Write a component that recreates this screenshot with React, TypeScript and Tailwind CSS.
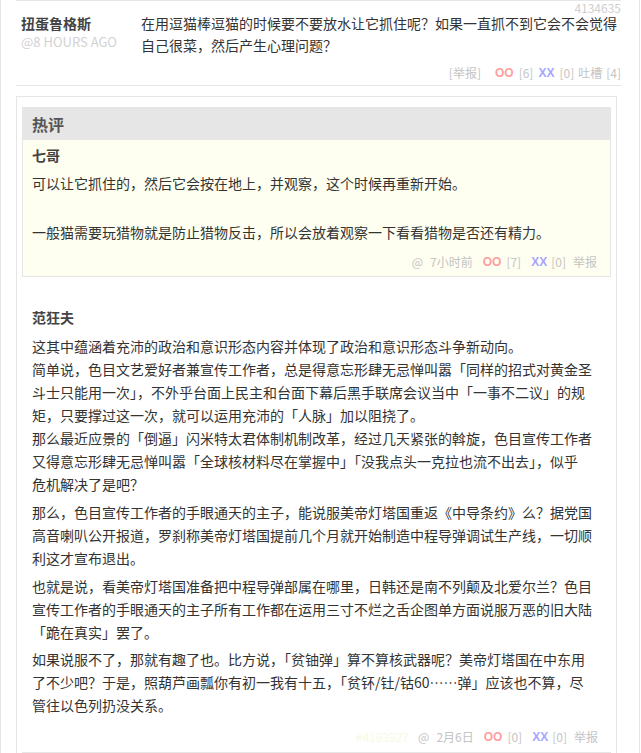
const oo = 'font-bold text-[#ff9e9e] font-["Liberation_Sans",sans-serif]';
const xx = 'font-bold text-[#a6a6ff] font-["Liberation_Sans",sans-serif]';

function Meta({ time, up, down, id }: { time: string; up: number; down: number; id?: string }) {
  return (
    <div className="flex justify-end text-[12px] leading-[16px] text-[#c4c4c4]">
      {id ? <span className="mr-[9px] text-[#f8f8e4]">{id}</span> : null}
      <span>@</span>
      <span className="ml-[7px]">{time}</span>
      <span className={`ml-[10px] ${oo}`}>OO</span>
      <span className="ml-[5px]">[{up}]</span>
      <span className={`ml-[10px] ${xx}`}>XX</span>
      <span className="ml-[4px]">[{down}]</span>
      <span className="ml-[7px]">举报</span>
    </div>
  );
}

const lines: { text: string[]; gap: string }[] = [
  { gap: '', text: ['这其中蕴涵着充沛的政治和意识形态内容并体现了政治和意识形态斗争新动向。'] },
  {
    gap: '',
    text: [
      '简单说，色目文艺爱好者兼宣传工作者，总是得意忘形肆无忌惮叫嚣「同样的招式对黄金圣',
      '斗士只能用一次」，不外乎台面上民主和台面下幕后黑手联席会议当中「一事不二议」的规',
      '矩，只要撑过这一次，就可以运用充沛的「人脉」加以阻挠了。',
    ],
  },
  {
    gap: '',
    text: [
      '那么最近应景的「倒逼」闪米特太君体制机制改革，经过几天紧张的斡旋，色目宣传工作者',
      '又得意忘形肆无忌惮叫嚣「全球核材料尽在掌握中」「没我点头一克拉也流不出去」，似乎',
      '危机解决了是吧？',
    ],
  },
  {
    gap: 'mt-[5px]',
    text: [
      '那么，色目宣传工作者的手眼通天的主子，能说服美帝灯塔国重返《中导条约》么？据党国',
      '高音喇叭公开报道，罗刹称美帝灯塔国提前几个月就开始制造中程导弹调试生产线，一切顺',
      '利这才宣布退出。',
    ],
  },
  {
    gap: 'mt-[5px]',
    text: [
      '也就是说，看美帝灯塔国准备把中程导弹部属在哪里，日韩还是南不列颠及北爱尔兰？色目',
      '宣传工作者的手眼通天的主子所有工作都在运用三寸不烂之舌企图单方面说服万恶的旧大陆',
      '「跪在真实」罢了。',
    ],
  },
  {
    gap: 'mt-[4px]',
    text: [
      '如果说服不了，那就有趣了也。比方说，「贫铀弹」算不算核武器呢？美帝灯塔国在中东用',
      '了不少吧？于是，照葫芦画瓢你有初一我有十五，「贫钚/钍/钴60……弹」应该也不算，尽',
      '管往以色列扔没关系。',
    ],
  },
];

export default function App() {
  return (
    <div className="min-h-[753px] w-[640px] border-x border-[#e6e6e6] bg-white font-['Noto_Sans_CJK_SC','Noto_Sans',sans-serif] text-[14px] text-[#333]">
      <div className="ml-[15px] w-[605px]">
        <div className="relative border-t border-[#e6e6e6] pt-[11px]">
          <span className="absolute right-0 top-[2px] text-[12px] leading-[10px] text-[#cfcfcf]">4134635</span>
          <div className="flex">
            <div className="w-[125px] shrink-0 pl-[5px]">
              <div className="font-bold leading-[22px] text-[#444]">扭蛋鲁格斯</div>
              <div className="text-[13px] leading-[16px] text-[#d2d2d2]">@8 HOURS AGO</div>
            </div>
            <p className="flex-1 leading-[22px]">在用逗猫棒逗猫的时候要不要放水让它抓住呢？如果一直抓不到它会不会觉得自己很菜，然后产生心理问题？</p>
          </div>
          <div className="mt-[9px] flex justify-end border-b border-[#e6e6e6] pb-[4px] text-[12px] leading-[16px] text-[#c4c4c4]">
            <span>[举报]</span>
            <span className={`ml-[14px] ${oo}`}>OO</span>
            <span className="ml-[5px]">[6]</span>
            <span className={`ml-[5px] ${xx}`}>XX</span>
            <span className="ml-[5px]">[0]</span>
            <span className="ml-[4px]">吐槽</span>
            <span className="ml-[4px]">[4]</span>
          </div>
        </div>

        <div className="mt-[10px] w-[601px] border border-[#e6e6e6] px-[5px] pt-[10px]">
          <div className="border border-[#e6e6e6]">
            <div className="h-[32px] bg-[#e6e6e6] pl-[9px] text-[16px] font-bold leading-[32px] text-[#555]">热评</div>
            <div className="bg-[#fefff0] pb-[6px] pl-[9px] pr-[13px] pt-[4px]">
              <div className="font-bold leading-[22px] text-[#444]">七哥</div>
              <p className="mt-[5px] leading-[24.5px]">可以让它抓住的，然后它会按在地上，并观察，这个时候再重新开始。</p>
              <p className="mt-[24.5px] leading-[24.5px]">一般猫需要玩猎物就是防止猎物反击，所以会放着观察一下看看猎物是否还有精力。</p>
              <div className="mt-[9.5px]">
                <Meta time="7小时前" up={7} down={0} />
              </div>
            </div>
          </div>

          <div className="border-b border-[#e6e6e6] pb-[7.5px] pl-[10px] pr-[13px] pt-[29px]">
            <div className="font-bold leading-[22px] text-[#444]">范狂夫</div>
            <div className="mt-[7px] whitespace-nowrap leading-[23px]">
              {lines.map((p, i) => (
                <p key={i} className={p.gap}>
                  {p.text.map((t, j) => (
                    <span key={j} className="block">
                      {t}
                    </span>
                  ))}
                </p>
              ))}
            </div>
            <div className="mt-[11.5px]">
              <Meta time="2月6日" up={0} down={0} id="#4193927" />
            </div>
          </div>
        </div>
      </div>
    </div>
  );
}
